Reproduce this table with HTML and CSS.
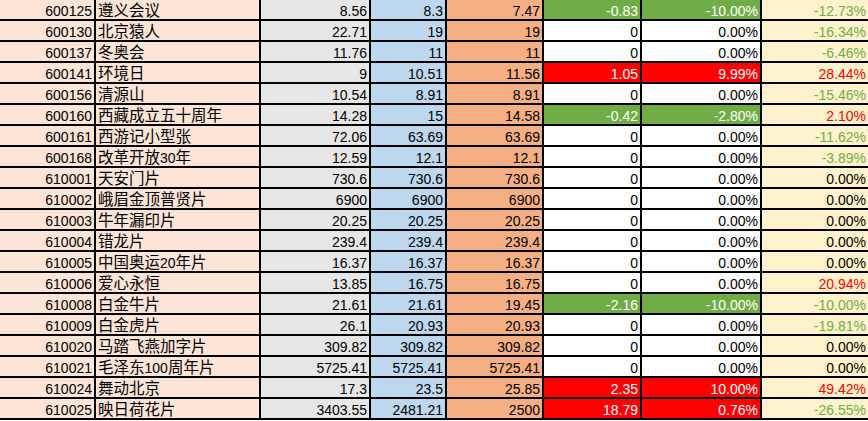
FILE: index.html
```html
<!DOCTYPE html>
<html lang="zh">
<head>
<meta charset="utf-8">
<title>邮票行情</title>
<link rel="stylesheet" href="styles.css">
</head>
<body>
<div class="sheet">
  <div class="row"><div class="cell code">600125</div><div class="cell name">遵义会议</div><div class="cell prev">8.56</div><div class="cell mid">8.3</div><div class="cell cur">7.47</div><div class="cell chg down">-0.83</div><div class="cell pct down">-10.00%</div><div class="cell ytd t-down">-12.73%</div></div>
  <div class="row"><div class="cell code">600130</div><div class="cell name">北京猿人</div><div class="cell prev">22.71</div><div class="cell mid">19</div><div class="cell cur">19</div><div class="cell chg">0</div><div class="cell pct">0.00%</div><div class="cell ytd t-down">-16.34%</div></div>
  <div class="row"><div class="cell code">600137</div><div class="cell name">冬奥会</div><div class="cell prev">11.76</div><div class="cell mid">11</div><div class="cell cur">11</div><div class="cell chg">0</div><div class="cell pct">0.00%</div><div class="cell ytd t-down">-6.46%</div></div>
  <div class="row"><div class="cell code">600141</div><div class="cell name">环境日</div><div class="cell prev">9</div><div class="cell mid">10.51</div><div class="cell cur">11.56</div><div class="cell chg up">1.05</div><div class="cell pct up">9.99%</div><div class="cell ytd t-up">28.44%</div></div>
  <div class="row"><div class="cell code">600156</div><div class="cell name">清源山</div><div class="cell prev">10.54</div><div class="cell mid">8.91</div><div class="cell cur">8.91</div><div class="cell chg">0</div><div class="cell pct">0.00%</div><div class="cell ytd t-down">-15.46%</div></div>
  <div class="row"><div class="cell code">600160</div><div class="cell name">西藏成立五十周年</div><div class="cell prev">14.28</div><div class="cell mid">15</div><div class="cell cur">14.58</div><div class="cell chg down">-0.42</div><div class="cell pct down">-2.80%</div><div class="cell ytd t-up">2.10%</div></div>
  <div class="row"><div class="cell code">600161</div><div class="cell name">西游记小型张</div><div class="cell prev">72.06</div><div class="cell mid">63.69</div><div class="cell cur">63.69</div><div class="cell chg">0</div><div class="cell pct">0.00%</div><div class="cell ytd t-down">-11.62%</div></div>
  <div class="row"><div class="cell code">600168</div><div class="cell name">改革开放<span class="lat">30</span>年</div><div class="cell prev">12.59</div><div class="cell mid">12.1</div><div class="cell cur">12.1</div><div class="cell chg">0</div><div class="cell pct">0.00%</div><div class="cell ytd t-down">-3.89%</div></div>
  <div class="row"><div class="cell code">610001</div><div class="cell name">天安门片</div><div class="cell prev">730.6</div><div class="cell mid">730.6</div><div class="cell cur">730.6</div><div class="cell chg">0</div><div class="cell pct">0.00%</div><div class="cell ytd">0.00%</div></div>
  <div class="row"><div class="cell code">610002</div><div class="cell name">峨眉金顶普贤片</div><div class="cell prev">6900</div><div class="cell mid">6900</div><div class="cell cur">6900</div><div class="cell chg">0</div><div class="cell pct">0.00%</div><div class="cell ytd">0.00%</div></div>
  <div class="row"><div class="cell code">610003</div><div class="cell name">牛年漏印片</div><div class="cell prev">20.25</div><div class="cell mid">20.25</div><div class="cell cur">20.25</div><div class="cell chg">0</div><div class="cell pct">0.00%</div><div class="cell ytd">0.00%</div></div>
  <div class="row"><div class="cell code">610004</div><div class="cell name">错龙片</div><div class="cell prev">239.4</div><div class="cell mid">239.4</div><div class="cell cur">239.4</div><div class="cell chg">0</div><div class="cell pct">0.00%</div><div class="cell ytd">0.00%</div></div>
  <div class="row"><div class="cell code">610005</div><div class="cell name">中国奥运<span class="lat">20</span>年片</div><div class="cell prev">16.37</div><div class="cell mid">16.37</div><div class="cell cur">16.37</div><div class="cell chg">0</div><div class="cell pct">0.00%</div><div class="cell ytd">0.00%</div></div>
  <div class="row"><div class="cell code">610006</div><div class="cell name">爱心永恒</div><div class="cell prev">13.85</div><div class="cell mid">16.75</div><div class="cell cur">16.75</div><div class="cell chg">0</div><div class="cell pct">0.00%</div><div class="cell ytd t-up">20.94%</div></div>
  <div class="row"><div class="cell code">610008</div><div class="cell name">白金牛片</div><div class="cell prev">21.61</div><div class="cell mid">21.61</div><div class="cell cur">19.45</div><div class="cell chg down">-2.16</div><div class="cell pct down">-10.00%</div><div class="cell ytd t-down">-10.00%</div></div>
  <div class="row"><div class="cell code">610009</div><div class="cell name">白金虎片</div><div class="cell prev">26.1</div><div class="cell mid">20.93</div><div class="cell cur">20.93</div><div class="cell chg">0</div><div class="cell pct">0.00%</div><div class="cell ytd t-down">-19.81%</div></div>
  <div class="row"><div class="cell code">610020</div><div class="cell name">马踏飞燕加字片</div><div class="cell prev">309.82</div><div class="cell mid">309.82</div><div class="cell cur">309.82</div><div class="cell chg">0</div><div class="cell pct">0.00%</div><div class="cell ytd">0.00%</div></div>
  <div class="row"><div class="cell code">610021</div><div class="cell name">毛泽东<span class="lat">100</span>周年片</div><div class="cell prev">5725.41</div><div class="cell mid">5725.41</div><div class="cell cur">5725.41</div><div class="cell chg">0</div><div class="cell pct">0.00%</div><div class="cell ytd">0.00%</div></div>
  <div class="row"><div class="cell code">610024</div><div class="cell name">舞动北京</div><div class="cell prev">17.3</div><div class="cell mid">23.5</div><div class="cell cur">25.85</div><div class="cell chg up">2.35</div><div class="cell pct up">10.00%</div><div class="cell ytd t-up">49.42%</div></div>
  <div class="row"><div class="cell code">610025</div><div class="cell name">映日荷花片</div><div class="cell prev">3403.55</div><div class="cell mid">2481.21</div><div class="cell cur">2500</div><div class="cell chg up">18.79</div><div class="cell pct up">0.76%</div><div class="cell ytd t-down">-26.55%</div></div>
</div>
</body>
</html>
```

FILE: styles.css
```css
html, body {
  margin: 0;
  padding: 0;
  background: #ffffff;
}

.sheet {
  display: flex;
  flex-direction: column;
  width: 868px;
  font-family: "Liberation Sans", "Noto Sans CJK SC", sans-serif;
  font-size: 14px;
  color: #000;
}

.row {
  display: grid;
  grid-template-columns: 96px 165px 110px 76px 97px 98px 120px 106px;
  height: 21px;
}

.cell {
  box-sizing: border-box;
  height: 21px;
  border-right: 2px solid #000;
  border-bottom: 2px solid #000;
  padding: 3px 2px 0 2px;
  line-height: 16px;
  text-align: right;
  white-space: nowrap;
  overflow: hidden;
}

.code { background: #fce4d6; }
.name {
  background: #fce4d6;
  text-align: left;
  font-size: 15.5px;
  padding-top: 2px;
  line-height: 17px;
}
.name .lat { font-size: 14px; }
.prev { background: #e7e6e6; }
.mid { background: #bdd7ee; }
.cur { background: #f4b084; }
.chg, .pct { background: #ffffff; }
.ytd {
  background: #fff2cc;
  border-right: none;
}

.down { background: #70ad47; color: #ffffff; }
.up { background: #ff0000; color: #ffffff; }
.t-down { color: #70ad47; }
.t-up { color: #ff0000; }
```
